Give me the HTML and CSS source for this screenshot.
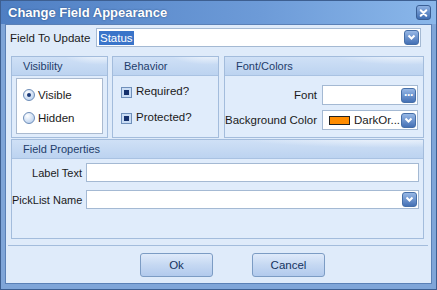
FILE: index.html
```html
<!DOCTYPE html>
<html lang="en">
  <head>
    <meta charset="UTF-8" />
    <title>Change Field Appearance</title>
    <link rel="stylesheet" href="styles.css">
  </head>
  <body>
    <div class="window">
      <div class="titlebar">
        <span class="title">Change Field Appearance</span>
        <span class="close">
          <svg width="14" height="14" viewBox="0 0 14 14"><path d="M4 4 L10 10 M10 4 L4 10" stroke="#fff" stroke-width="2.2" stroke-linecap="round"/></svg>
        </span>
      </div>

      <div class="content">
        <div class="field-row">
          <label class="lbl">Field To Update</label>
          <div class="combo wide">
            <span class="sel">Status</span>
            <span class="drop">
              <svg width="9" height="7" viewBox="0 0 9 7"><path d="M1.5 1.5 L4.5 4.5 L7.5 1.5" fill="none" stroke="#fff" stroke-width="2"/></svg>
            </span>
          </div>
        </div>

        <div class="groups">
          <div class="group visibility">
            <div class="ghead">Visibility</div>
            <div class="gbody">
              <div class="radiobox">
                <div class="opt"><span class="radio on"></span>Visible</div>
                <div class="opt"><span class="radio"></span>Hidden</div>
              </div>
            </div>
          </div>

          <div class="group behavior">
            <div class="ghead">Behavior</div>
            <div class="gbody checks">
              <div class="opt"><span class="check"></span>Required?</div>
              <div class="opt"><span class="check"></span>Protected?</div>
            </div>
          </div>

          <div class="group fontcolors">
            <div class="ghead">Font/Colors</div>
            <div class="gbody fc">
              <div class="fc-row">
                <label class="lbl">Font</label>
                <div class="combo small">
                  <span class="sel"></span>
                  <span class="drop dots">&middot;&middot;&middot;</span>
                </div>
              </div>
              <div class="fc-row">
                <label class="lbl">Background Color</label>
                <div class="combo small">
                  <span class="swatch"></span>
                  <span class="sel">DarkOr...</span>
                  <span class="drop">
                    <svg width="9" height="7" viewBox="0 0 9 7"><path d="M1.5 1.5 L4.5 4.5 L7.5 1.5" fill="none" stroke="#fff" stroke-width="2"/></svg>
                  </span>
                </div>
              </div>
            </div>
          </div>
        </div>

        <div class="group props">
          <div class="ghead">Field Properties</div>
          <div class="gbody fp">
            <div class="fp-row">
              <label class="lbl">Label Text</label>
              <div class="combo long"></div>
            </div>
            <div class="fp-row">
              <label class="lbl">PickList Name</label>
              <div class="combo long">
                <span class="sel"></span>
                <span class="drop">
                  <svg width="9" height="7" viewBox="0 0 9 7"><path d="M1.5 1.5 L4.5 4.5 L7.5 1.5" fill="none" stroke="#fff" stroke-width="2"/></svg>
                </span>
              </div>
            </div>
          </div>
        </div>

        <div class="buttons">
          <button class="btn">Ok</button>
          <button class="btn">Cancel</button>
        </div>
      </div>
    </div>
  </body>
</html>
```

FILE: styles.css
```css
* {
  margin: 0;
  padding: 0;
  box-sizing: border-box;
}
body {
  background: #fff;
  font-family: "Liberation Sans", Arial, sans-serif;
  font-size: 11px;
  color: #1a1a1a;
}
.lbl {
  white-space: nowrap;
}
.window {
  width: 437px;
  height: 290px;
  border: 1px solid #3d5f91;
  background: #7fa5d8;
  display: flex;
  flex-direction: column;
}
/* 标题栏 */
.titlebar {
  height: 23px;
  display: flex;
  align-items: center;
  justify-content: space-between;
  padding: 0 5px 0 7px;
  background: linear-gradient(to right, #4f7fc3, #6d9bd8 60%, #8ab7ea);
}
.title {
  color: #fff;
  font-weight: bold;
  font-size: 13px;
  text-shadow: 0 0 2px #2a4d80;
}
.close {
  width: 15px;
  height: 15px;
  border-radius: 3px;
  border: 1px solid #3a5f95;
  background: linear-gradient(#8db1e3, #3f6db1);
  display: flex;
  align-items: center;
  justify-content: center;
}
.content {
  flex: 1;
  margin: 0 4px 5px;
  border: 1px solid #5a80b6;
  background: #dfebfa;
  display: flex;
  flex-direction: column;
  padding: 3px 7px 0 4px;
}
.field-row {
  display: flex;
  align-items: center;
  height: 19px;
}
.field-row .lbl {
  width: 86px;
  font-size: 11.5px;
}
.combo {
  height: 19px;
  background: #fff;
  border: 1px solid #a4b9d3;
  display: flex;
  align-items: center;
  padding: 0 1px 0 2px;
}
.combo .sel {
  flex: 1;
  white-space: nowrap;
}
.wide {
  flex: 1;
  margin-right: 3px;
}
.wide .sel {
  flex: none;
  background: #3a74c9;
  color: #fff;
  padding: 0 1px;
  line-height: 14px;
  font-size: 11.5px;
  margin-right: auto;
}
.drop {
  width: 15px;
  height: 15px;
  border-radius: 3px;
  background: linear-gradient(#97b8e6, #4470b5);
  border: 1px solid #466fa8;
  display: flex;
  align-items: center;
  justify-content: center;
  color: #fff;
  font-weight: bold;
}
.dots {
  font-size: 12px;
  line-height: 10px;
  letter-spacing: -1px;
}

/* 分组 */
.groups {
  display: flex;
  margin: 9px 0 0 1px;
  height: 82px;
}
.group {
  border: 1px solid #a3bcdc;
  background: #e0ecfb;
  display: flex;
  flex-direction: column;
}
.ghead {
  height: 19px;
  line-height: 18px;
  padding-left: 11px;
  color: #1e3d6b;
  border-bottom: 1px solid #a9c2e2;
  background:
    radial-gradient(ellipse 55% 90% at 92% -20%, rgba(255,255,255,0.75), rgba(255,255,255,0) 70%),
    linear-gradient(#cfe0f6, #bcd3f0);
}
.visibility {
  width: 97px;
  margin-right: 4px;
}
.behavior {
  width: 107px;
  margin-right: 5px;
}
.fontcolors {
  width: 200px;
}
.gbody {
  flex: 1;
}
.visibility .gbody {
  padding: 2px 4px 4px 4px;
}
.radiobox {
  height: 56px;
  background: #fff;
  border: 1px solid #aabad0;
  padding: 4px 0 0 6px;
}
.opt {
  display: flex;
  align-items: center;
  height: 24px;
  font-size: 11.5px;
}
.radiobox .opt {
  height: 23px;
}
.radio {
  width: 12px;
  height: 12px;
  border-radius: 50%;
  border: 1px solid #6d8db8;
  background: radial-gradient(circle at 35% 30%, #fff, #bcd2ef 80%);
  margin-right: 3px;
  position: relative;
}
.radio.on::after {
  content: '';
  position: absolute;
  left: 3px;
  top: 3px;
  width: 4px;
  height: 4px;
  border-radius: 50%;
  background: #1b3a79;
}
.checks {
  padding: 9px 0 0 8px;
}
.checks .opt {
  height: 26px;
  align-items: flex-start;
}
.check {
  width: 11px;
  height: 11px;
  border: 1px solid #6f8fba;
  background: #c9dcf4;
  margin: 2px 4px 0 0;
  display: flex;
  align-items: center;
  justify-content: center;
}
.check::after {
  content: '';
  width: 5px;
  height: 5px;
  background: #15306c;
}
.fc {
  padding: 9px 5px 0 0;
}
.fc-row {
  display: flex;
  align-items: center;
  justify-content: flex-end;
  margin-bottom: 5px;
  font-size: 11.5px;
}
.fc-row .lbl {
  margin-right: 5px;
}
.small {
  width: 96px;
  height: 20px;
}
.swatch {
  width: 21px;
  height: 9px;
  background: #ff8c00;
  border: 1px solid #222;
  margin: 0 4px 0 4px;
}
.props {
  margin: 1px 0 0 1px;
  height: 100px;
}
.fp {
  padding: 4px 4px 0 0;
}
.fp-row {
  display: flex;
  align-items: center;
  margin-bottom: 8px;
  font-size: 11px;
}
.fp-row .lbl {
  width: 70px;
  text-align: right;
  margin-right: 4px;
}
.long {
  flex: 1;
  height: 19px;
}
.buttons {
  margin: 6px -4px 0 -2px;
  border-top: 1px solid #a3bcdc;
  display: flex;
  gap: 39px;
  padding: 7px 0 0 132px;
}
.btn {
  width: 73px;
  height: 24px;
  border: 1px solid #7c9cc4;
  border-radius: 3px;
  background: linear-gradient(#dfeafa, #c5d8f2 50%, #b2caed);
  color: #15335f;
  font-family: "Liberation Sans", Arial, sans-serif;
  font-size: 11.5px;
}
```
